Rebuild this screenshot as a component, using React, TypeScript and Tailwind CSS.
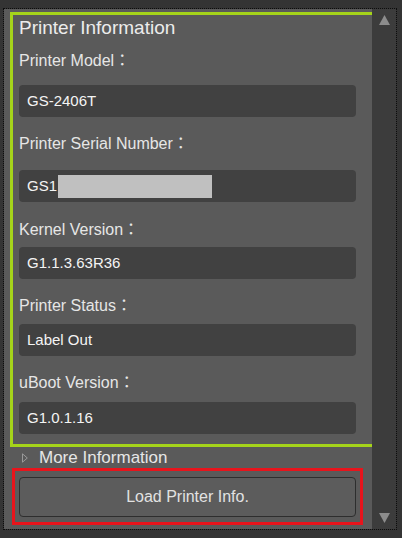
const fontStack = "font-['Liberation_Sans','Noto_Sans_CJK_JP',sans-serif]";

const fields = [
  { label: "Printer Model", value: "GS-2406T", labelMt: "mt-[11px]", inputMt: "mt-[14px]" },
  { label: "Printer Serial Number", value: "GS1", redacted: true, labelMt: "mt-[17px]", inputMt: "mt-[16px]" },
  { label: "Kernel Version", value: "G1.1.3.63R36", labelMt: "mt-[18px]", inputMt: "mt-[7px]" },
  { label: "Printer Status", value: "Label Out", labelMt: "mt-[17px]", inputMt: "mt-[8px]" },
  { label: "uBoot Version", value: "G1.0.1.16", labelMt: "mt-[17px]", inputMt: "mt-[9px]" },
];

const Field = ({ field }: { field: (typeof fields)[number] }) => (
  <>
    <div className={`${field.labelMt} h-[20px] text-[16px] leading-[20px] text-[#e6e6e6]`}>
      {field.label}：
    </div>
    <div
      className={`${field.inputMt} flex h-[32px] w-[337px] items-center rounded-[4px] bg-[#414141] pl-[8px] text-[15px] text-[#f4f4f4]`}
    >
      {field.value}
      {field.redacted && <span className="ml-px h-[23px] w-[154px] bg-[#c0c0c0]" />}
    </div>
  </>
);

export default function App() {
  return (
    <div className={`h-[538px] w-[402px] bg-[#343434] pt-[8px] pl-[3px] ${fontStack}`}>
      <div className="flex h-[522px] w-[394px] border border-dotted border-[#0c0c0c]">
        {/* main panel */}
        <div className="flex w-[368px] flex-col bg-[#5a5a5a]">
          <div className="mt-[3px] ml-[6px] w-[365px] border-[3px] border-[#a5d41a] pl-[6px] pb-[10px]">
            <div className="mt-[1px] h-[24px] text-[19px] leading-[24px] text-[#ececec]">
              Printer Information
            </div>
            {fields.map((f) => (
              <Field key={f.label} field={f} />
            ))}
          </div>

          {/* More information toggle */}
          <div className="flex h-[21px] items-center pl-[18px] text-[17px] text-[#e6e6e6]">
            <svg width="6" height="10" viewBox="0 0 6 10" className="mr-[11px]">
              <path d="M0.5 0.8 L5.3 5 L0.5 9.2 Z" fill="none" stroke="#9a9a9a" strokeWidth="1" />
            </svg>
            More Information
          </div>

          <div className="ml-[8px] w-[351px] border-[3px] border-[#e8141c] px-[4px] pt-[6px] pb-[5px]">
            <button className="flex h-[40px] w-full items-center justify-center rounded-[4px] border border-[#2e2e2e] bg-[#5c5c5c] text-[16px] text-[#e2e2e2]">
              Load Printer Info.
            </button>
          </div>
        </div>

        {/* scrollbar */}
        <div className="flex w-[24px] flex-col items-center justify-between bg-[#3c3c3c] pt-[6px] pb-[6px]">
          <svg width="11" height="10" viewBox="0 0 11 10">
            <path d="M5.5 0 L11 10 L0 10 Z" fill="#8c8c8c" />
          </svg>
          <svg width="11" height="10" viewBox="0 0 11 10">
            <path d="M0 0 L11 0 L5.5 10 Z" fill="#8c8c8c" />
          </svg>
        </div>
      </div>
    </div>
  );
}
